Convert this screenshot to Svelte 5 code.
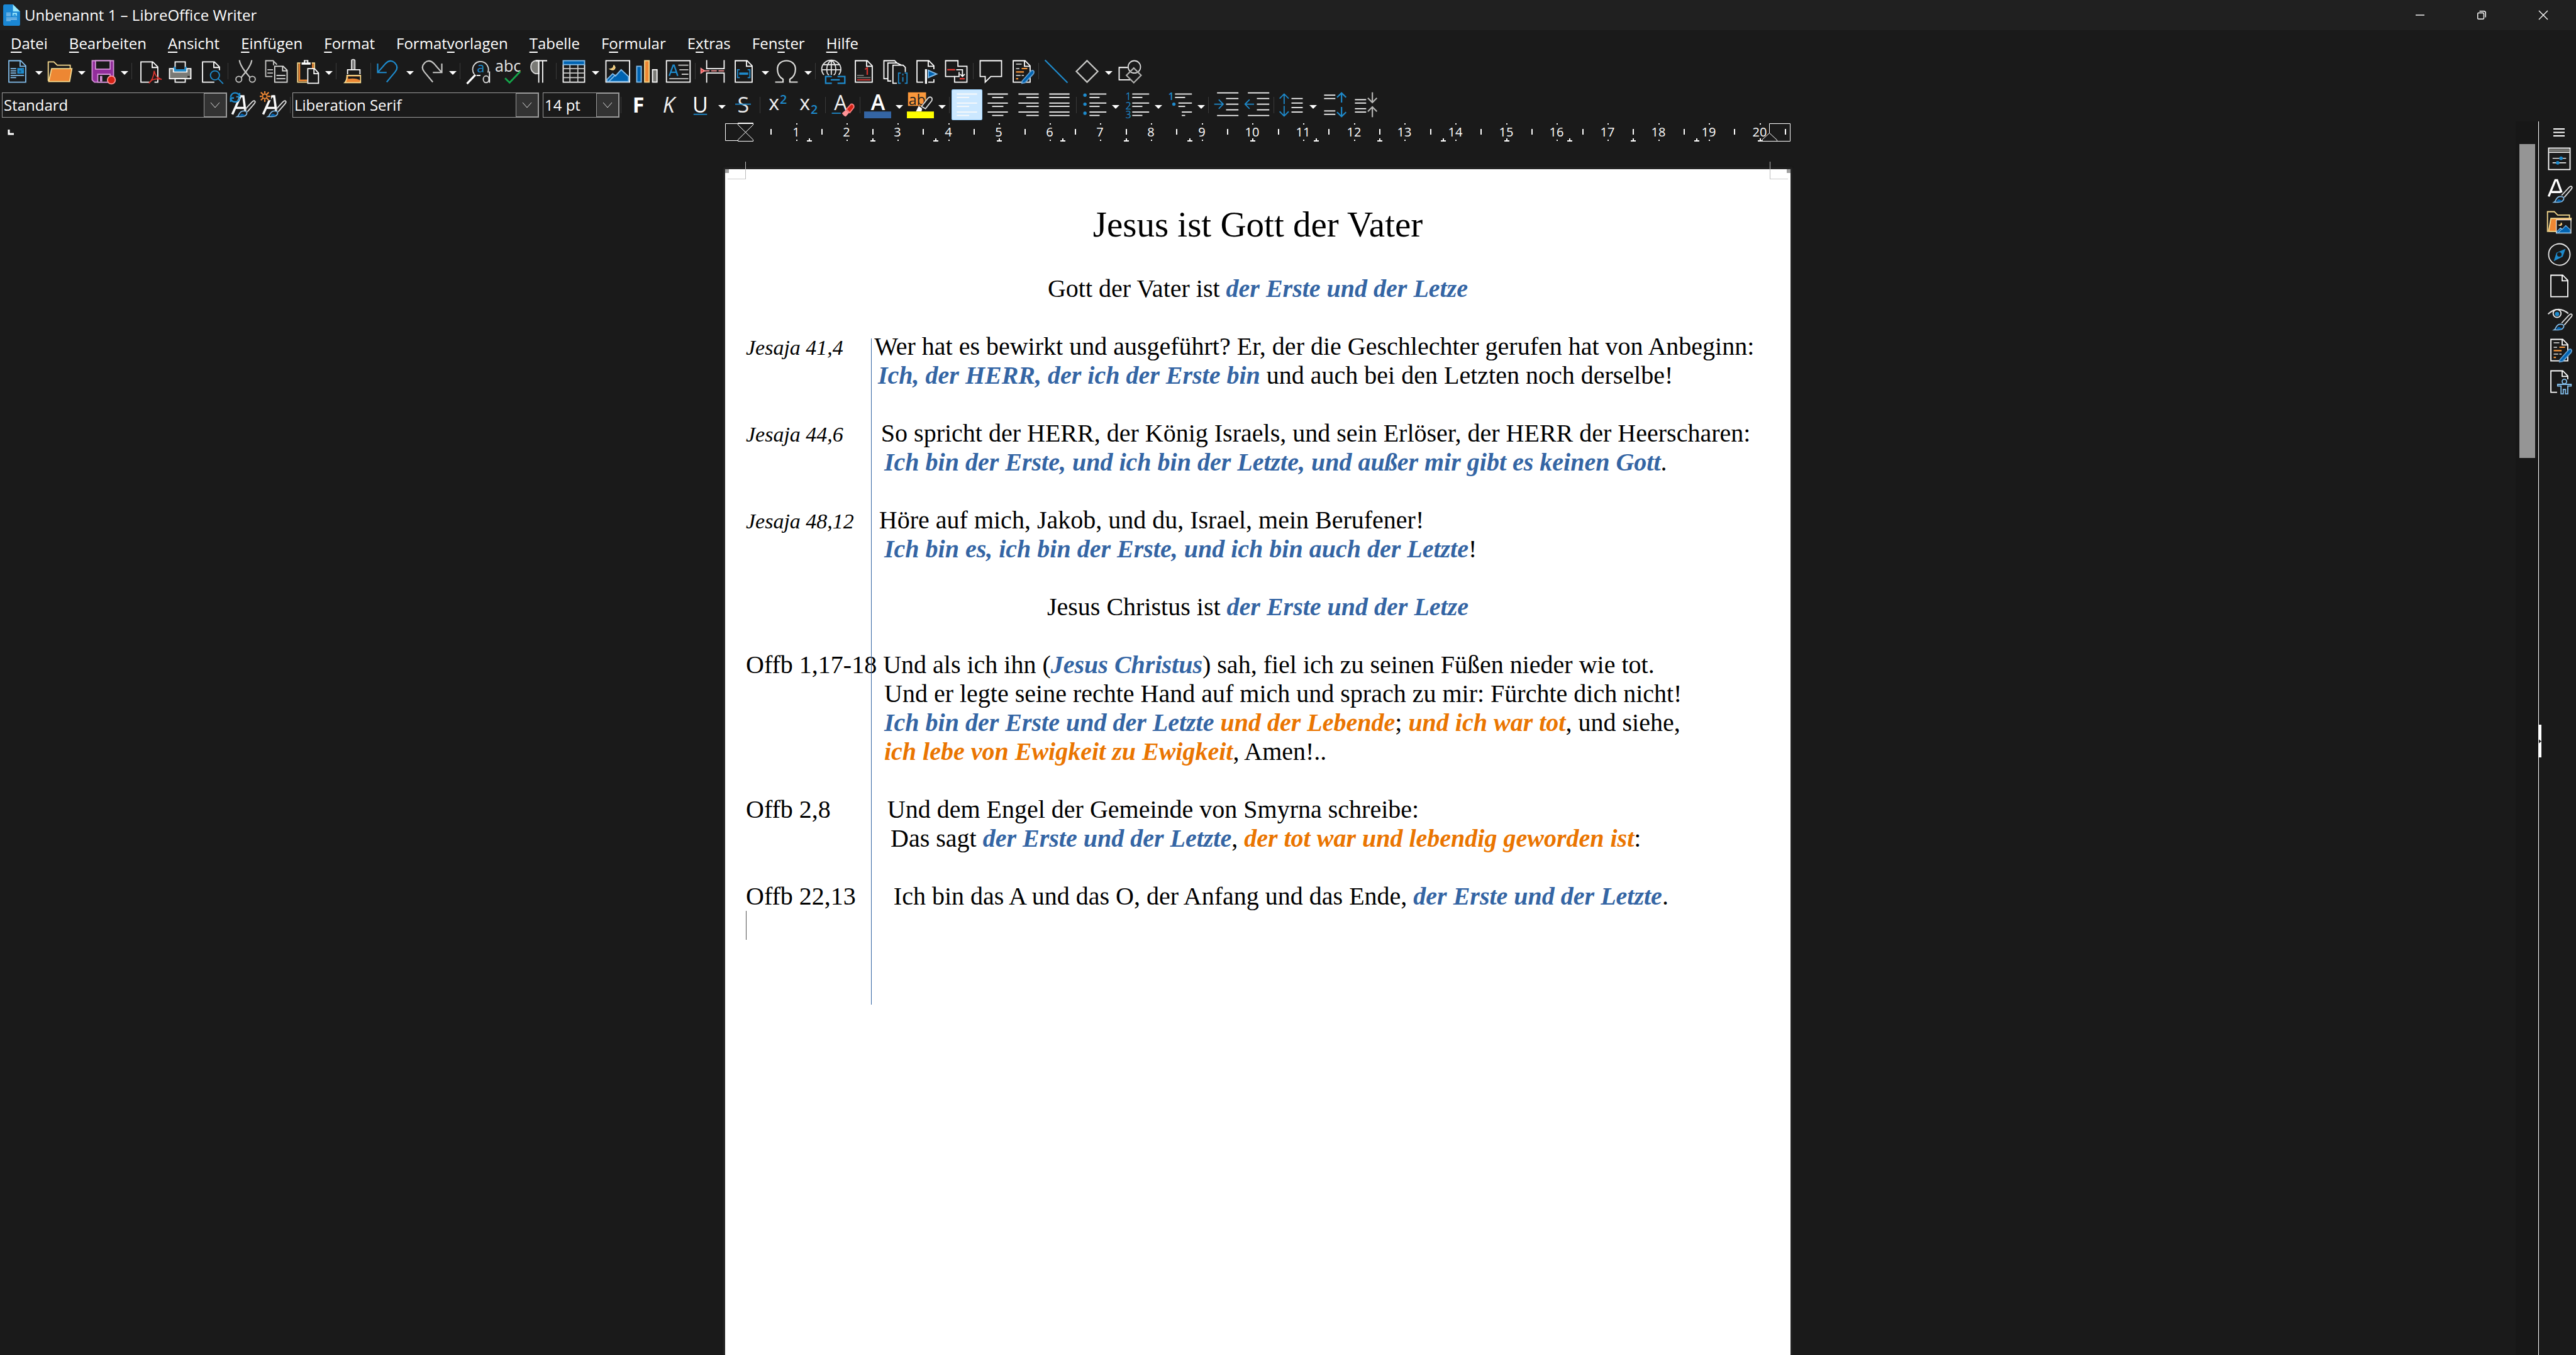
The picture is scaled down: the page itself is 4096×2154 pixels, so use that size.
<script>
  const menus = [
    ['', 'D', 'atei'],
    ['', 'B', 'earbeiten'],
    ['', 'A', 'nsicht'],
    ['', 'E', 'infügen'],
    ['', 'F', 'ormat'],
    ['Format', 'v', 'orlagen'],
    ['', 'T', 'abelle'],
    ['F', 'o', 'rmular'],
    ['E', 'x', 'tras'],
    ['Fen', 's', 'ter'],
    ['', 'H', 'ilfe'],
  ];

  const sheet = (color = '#fff') =>
    `<path d="M4.5 2.5h10.5l4.5 4.5v14.5h-15z" stroke="${color}"/><path d="M14.5 2.5v5h5" stroke="${color}"/>`;
  const brush = `<path d="M14 16.5l6.5-7c1-1 2-1.300 2.500-.8s.2 1.600-.6 2.500l-6 7" stroke="#ddd"/><path d="M7.500 22.500c1.800-1 1.400-5 5.500-5 2.500 0 3.300 1 2.800 2.600-.6 1.900-3 2.400-4.800 2.400z" stroke="#83beec"/><path d="M9 22c1.200-.5 1.300-2 2.500-2s1.500 1 3 1l-1 1z" fill="#0063b1"/>`;
  const thickA = `<path d="M3 20.500L10.300 4.500h2.500l1.700 13M5.500 14.800h8" stroke="#fafafa" stroke-width="2"/>`;
  const mountains = (x, y, s) =>
    `<g transform="translate(${x} ${y}) scale(${s})"><rect x=".5" y=".5" width="21" height="19" fill="#1a1a1a" stroke="#fff"/><path d="M1.500 19v-2l5-5 2.500 2 5-5.500 6.500 6v4.500z" fill="#0063b1" stroke="#83beec"/><path d="M3 19l6-6" stroke="#83beec"/><path d="M7.500 4.500q0 3-3 3.500 3.500 1.500 4-1.500z" fill="#ed8733" stroke="#f8db8f"/></g>`;
  const page_edit = `${sheet()}<path d="M7 5.500h5M7 9.500h3M7 15.500h4M12 15.500h2" stroke="#c8c8c6"/><path d="M12 9.500h5M7 12.500h7M7 18.500h2" stroke="#fb983b" stroke-width="1.200"/><path d="M12.500 20.500l7.500-8.500q1.500-1.500 2.500-.5t-.3 3l-7.200 7.500-2.800.5z" fill="#0063b1" stroke="#659fd0"/>`;
  const lines = (rows) => rows.map(([x, y, w]) => `<path d="M${x} ${y}h${w}" stroke="#fafafa" stroke-width="1"/>`).join('');
  const ys = [2.5, 5.5, 10.5, 13.5, 18.5, 21.5];
  const para = (x, short_x, full, short) => lines(ys.map((y, i) => (i % 2 ? [short_x, y, short] : [x, y, full])));

  const icons = {
    new: `${sheet('#83beec')}<path d="M6 9.500h5M6 11.500h5M6 13.500h5M6 15.500h12M6 17.500h5" stroke="#83beec"/><rect x="12" y="9" width="6" height="5" fill="#1e8bcd"/><path d="M13.500 13v-2h2v2zM16.500 10h1v1h-1z" fill="#15608f"/>`,
    open: `<path d="M1.500 20.500v-17h5l3 3h11.500v3.500" stroke="#f8db8f"/><path d="M4.500 9.500h18l-2 11.500h-18.500z" fill="#ed8733" stroke="#f8db8f"/>`,
    save: `<path d="M2.500 2.500h19v19h-17l-2-2z" fill="#922e9b" stroke="#d492d8"/><path d="M5.500 2.500h13v7.500h-13z" fill="#1a1a1a" stroke="#d492d8"/><path d="M7.500 21.500v-7h11v7z" fill="#1a1a1a" stroke="#d492d8"/><path d="M10.500 16v5" stroke="#d492d8" stroke-width="2"/><circle cx="19.600" cy="19.600" r="3.500" fill="#d62316" stroke="#ff9396"/>`,
    pdf: `<path d="M12 21.500h-7.500v-18h10.500l4.500 4.500v13.500h-3M14.500 3.500v5h5" stroke="#fff"/><path d="M11.500 22.500q4-3 4.800-11q1.200 6.500 6.700 7.500q-6-1.200-10 1.500" stroke="#d8342f"/>`,
    print: `<path d="M7.500 11v-7.500h9v7.500" stroke="#fff"/><path d="M6 8h2v2h8v-2h2v4H6z" fill="#1e8bcd"/><path d="M2.500 9.500h3.500v3h12v-3h3.500v9h-19z" fill="#7a7a76" stroke="#fff"/><path d="M7 10.500h10v1.500h-10z" fill="#1e8bcd"/><rect x="18.500" y="16" width="2" height="1.500" fill="#222"/><path d="M7.500 18.500v3h9v-3z" fill="#1a1a1a" stroke="#fff"/>`,
    preview: `<path d="M15 21.500h-10.500v-18h10.500l4.500 4.500v3M14.500 3.500v5h5" stroke="#fff"/><circle cx="15.500" cy="15.500" r="4" stroke="#1e8bcd"/><path d="M18.300 18.300l4.500 4.700" stroke="#1e8bcd"/>`,
    cut: `<path d="M6.500 2q.5 4 5 10l4.500 5.500M17.500 2q-.5 4-5 10l-4.500 5.500" stroke="#c8c8c6" stroke-width="1.200"/><circle cx="6" cy="19" r="2.600" stroke="#c8c8c6"/><circle cx="18" cy="19" r="2.600" stroke="#c8c8c6"/>`,
    copy: `<path d="M8.500 16.500h-6v-14h6.500l3.500 3.500M9.500 2.500v4M4 10.500h5M4 13.500h5" stroke="#c8c8c6"/><path d="M10.500 7.500h7.500l3.500 3.500v10.500h-11zM17.500 7.500v4h4M12 15.500h8M12 18.500h8" stroke="#e0e0de"/>`,
    paste: `<path d="M6 4.500h-2.500v17h8.500M16 4.500h2.500v5" stroke="#f8db8f"/><path d="M5 5v15h7M17 5v5" stroke="#ed8733" stroke-width="1.500"/><path d="M7 4h2v-2h4v2h2v2H7z" fill="#fff"/><circle cx="11" cy="3.500" r="1" fill="#555"/><path d="M12.500 9.500h6l3.500 4v9h-9.500zM18 9.500v4.500h4" stroke="#fff"/>`,
    clone: `<path d="M10 10V2.500q0-1 1.500-1t1.500 1V10" fill="#777" stroke="#ddd"/><path d="M6.500 14.500v-4h11v4" stroke="#fff"/><path d="M6 15.500h12v6.500H4q2-2 2-6.500z" fill="#ed8733" stroke="#f8db8f"/><path d="M7 16.500h10.500v3.500q-3-2.500-10.500-1.500z" fill="#1a1a1a"/>`,
    undo: `<path d="M2.500 5v8h8M3 12.500l6.500-7.500q4-4 8-.8c3 3 2.500 6 .5 8.300l-7.500 9" stroke="#1e8bcd" stroke-width="1.200"/>`,
    redo: `<path d="M21.500 5v8h-8M21 12.500l-6.500-7.500q-4-4-8-.8c-3 3-2.500 6-.5 8.300l7.500 9" stroke="#c8c8c6" stroke-width="1.200"/>`,
    find: `<path d="M9 14.500A7 7 0 1 1 21 13" stroke="#ddd"/><path d="M10 15l-7.500 8" stroke="#fff" stroke-width="1.800"/><text x="11.500" y="13" font-size="12" fill="#1e8bcd">a</text><path d="M11 15.500h3.500M22.500 12v10" stroke="#fff"/><ellipse cx="19.500" cy="19" rx="2.500" ry="3" stroke="#ddd"/>`,
    spell: `<text x="0" y="12" font-size="14" fill="#e6e6e6">abc</text><path d="M9 18l4 4 9.500-10" stroke="#14a84b" stroke-width="1.500"/>`,
    marks: `<path d="M11.500 2.500h-3q-4 1-4 5.500t4 6h3z" fill="#7a7a76" stroke="#ddd"/><path d="M9 2.500h10M11.500 2.500v19.500M15 2.500v19.500" stroke="#fff"/>`,
    table: `<path d="M2.500 6v15.500h19v-15.500" stroke="#fff"/><path d="M8.500 6v15.500M15.500 6v15.500M2.500 9.500h19M2.500 13.500h19M2.500 17.500h19" stroke="#c8c8c6"/><rect x="2.500" y="2.500" width="19" height="3.500" fill="#0063b1" stroke="#83beec"/>`,
    image: mountains(2, 2, 1),
    chart: `<rect x="2.500" y="7.500" width="4" height="14" fill="#0063b1" stroke="#83beec"/><rect x="9.500" y="2.500" width="4" height="19" fill="#ed8733" stroke="#f8db8f"/><rect x="16.500" y="10.500" width="4" height="11" fill="#7a7a76" stroke="#fff"/>`,
    textbox: `<rect x="1.500" y="2.500" width="21" height="19" stroke="#fff"/><path d="M4 16l3.500-9.500h.8L11.500 16M5 12.800h5.500" stroke="#1e8bcd" stroke-width="1.300"/><path d="M12 6.500h9M13 10.500h8M15 14.500h6M4 18.500h17" stroke="#c8c8c6"/>`,
    pagebreak: `<path d="M6.500 2v7.500h15.500v-7.500M6.500 22v-8.500h15.500v8.500" stroke="#fff"/><path d="M4 11.500h18" stroke="#ff9396" stroke-dasharray="5 1.500"/><path d="M1.500 9.500l3 2-3 2z" fill="#d8342f" stroke="#ff9396"/>`,
    field: `${sheet()}<path d="M8.500 10.500h-2v7h2M15.500 10.500h2v7h-2" stroke="#1e8bcd"/><path d="M8 14h8" stroke="#1e8bcd" stroke-width="2"/>`,
    omega: `<path d="M2 21.500h7v-2.500q-5-3-5-9c0-10 16-10 16 0q0 6-5 9v2.500h7" stroke="#e0e0de" stroke-width="1.200"/>`,
    link: `<path d="M4 15q-2-2-2-5a8.500 8 0 0 1 17 0q0 3-2 5M2 10.500h17M3.500 6h14M10.500 2q-4 3-4 8t2 5M10.500 2q4 3 4 8t-2 5M10.500 2v13" stroke="#e8e8e8"/><path d="M11 16.500h-5.500v6h5.500M16 16.500h6.500v6h-6.500M10 19.500h8" stroke="#1e8bcd" stroke-width="1.300"/>`,
    footnote: `${sheet()}<text x="12" y="15" font-size="9" font-weight="600" fill="#e23a35">1</text><path d="M6 15.500h6M6 17.500h12" stroke="#7a7a76"/><path d="M6 19.500h12" stroke="#e23a35"/>`,
    endnote: `<path d="M6 18.500h-3.500v-16h9.500l2 2M9 20.500h-3v-16h8l4 2M14 22.500h-3.500v-16h9l2 2v4" stroke="#fff"/><path d="M17.500 13.500h-2v9h2M21 13.500h2v9h-2M19.300 14v1.500M19.300 17v4" stroke="#1e8bcd"/>`,
    bookmark: `<path d="M10 21.500h-5.500v-19h10.500l4.500 4.500v3M14.500 2.500v5h5M19.500 19v2.500h-5" stroke="#fff"/><path d="M12.500 10v13" stroke="#fff" stroke-width="1.800"/><path d="M14.500 11v6.500l7.500-3.200z" fill="#0063b1" stroke="#83beec"/>`,
    crossref: `<path d="M13.500 8v-5.500h-11v14h8" stroke="#fff"/><path d="M14 7.500h7.500v14h-11v-5h4v-4" stroke="#fff"/><path d="M4 10.500h7" stroke="#e23a35" stroke-width="1.300"/><path d="M12 10.500h5.500v6M15.500 14.500l2 2 2-2" stroke="#fff"/><path d="M15 18.500h4.500" stroke="#e23a35" stroke-width="1.300"/>`,
    comment: `<path d="M2.500 2.500h19v14h-9.500l-5 5v-5h-4.500z" stroke="#fff"/>`,
    track: page_edit,
    line: `<path d="M2 2l20 20" stroke="#1e8bcd" stroke-width="1.200"/>`,
    diamond: `<path d="M12 2.500l9.500 9.500-9.500 9.500-9.500-9.500z" stroke="#c8c8c6" stroke-width="1.300"/>`,
    shapes: `<path d="M10 8.500h-7.500v11h10" stroke="#fff"/><ellipse cx="16" cy="8" rx="5.500" ry="5.500" stroke="#ddd"/><path d="M15.500 9l6.500 6.500-6.500 6.500-6.500-6.500z" stroke="#b0b0ae" stroke-width="1.200"/>`,
    updatestyle: `${thickA}${brush}<path d="M1.500 5q1-3.500 4-3.500t4 3M9.500 1.500v3.500h-3M9.500 6q-1 3.500-4 3.500t-4-3M1.500 9.500v-3.500h3" stroke="#1e8bcd" stroke-width="1.300"/>`,
    newstyle: `${thickA}${brush}<path d="M0 0h12v4h-2v4h-3z" fill="#1a1a1a"/><path d="M10.300 4.500h2.500" stroke="#fafafa" stroke-width="2"/><circle cx="4.500" cy="4.500" r="2" stroke="#ed8733"/><path d="M4.500 0v2M4.500 7v2.500M0 4.500h2M7 4.500h2.500M1 1l2 2M8 1l-2 2M1 8l2-2M8 8l-2-2" stroke="#ed8733" stroke-width="1.200"/>`,
    bold: `<text x="6.500" y="19" font-size="19" font-weight="700" fill="#fff">F</text>`,
    italic: `<text x="6" y="19" font-size="19" font-style="italic" fill="#f0f0f0">K</text>`,
    underline: `<text x="5" y="19" font-size="19" fill="#fff">U</text><path d="M6 20.500h12" stroke="#1e8bcd"/>`,
    strike: `<text x="7" y="19" font-size="19" fill="#e8e8e8">S</text><path d="M5 11.500h14" stroke="#1e8bcd"/>`,
    sup: `<text x="4" y="17" font-size="18" fill="#f0f0f0">x</text><text x="14" y="11" font-size="11" font-weight="600" fill="#1e8bcd">2</text>`,
    sub: `<text x="4" y="17" font-size="18" fill="#f0f0f0">x</text><text x="14" y="20" font-size="11" font-weight="600" fill="#1e8bcd">2</text>`,
    clear: `<text x="4" y="17" font-size="18" fill="#f0f0f0">A</text><path d="M2 19.500h8" stroke="#1e8bcd"/><path d="M15 16l4-4.500q1-.5 2 .5t.5 2.500l-3.500 4.500z" fill="#d62316" stroke="#ff7f80"/><path d="M11 19.500l3.500-3 3 2.500-3 3.500q-1.500 0-3.500-3z" fill="#ff9396"/>`,
    color: `<text x="6" y="17" font-size="19" font-weight="600" fill="#fff">A</text><rect x="0" y="18" width="24" height="6" fill="#3465a4"/>`,
    mark: `<rect x="1" y="1" width="16" height="12" fill="#fb983b"/><text x="1.500" y="12" font-size="13" fill="#222">ab</text><path d="M13 13.500l5.500-7q1.500-2 3-1t.5 3l-5.500 7z" fill="#1a1a1a" stroke="#ddd"/><path d="M8 18l2.500-5 3 2.500-.5 2.500z" fill="#fff"/><rect x="0" y="18" width="24" height="6" fill="#ff0"/>`,
    left: para(3, 3, 18, 11),
    center: para(3, 7, 18, 10),
    right: para(3, 10, 18, 11),
    justify: lines(ys.map((y) => [3, y, 18])),
    bullets: `${para(8, 8, 15, 9)}<circle cx="4" cy="3.500" r="1.500" fill="#1e8bcd"/><circle cx="4" cy="11.500" r="1.500" fill="#1e8bcd"/><circle cx="4" cy="19.500" r="1.500" fill="#1e8bcd"/>`,
    numbers: `${para(8, 8, 15, 9)}<g font-size="9" fill="#1e8bcd"><text x="2" y="8">1</text><text x="2" y="16">2</text><text x="2" y="24">3</text></g>`,
    outline: `${lines([[8, 2.5, 15], [8, 5.5, 9], [11, 10.5, 12], [11, 13.5, 6], [14, 18.5, 9], [14, 21.5, 3]])}<text x="2" y="8" font-size="9" font-weight="600" fill="#1e8bcd">1</text><circle cx="7" cy="11.500" r="1.500" fill="#1e8bcd"/>`,
    indent: `${lines([[4, 1.5, 19], [12, 6.5, 11], [12, 11.5, 11], [12, 16.5, 11], [4, 21.5, 19]])}<path d="M1.500 11.500h8M5.500 7.500l4 4-4 4" stroke="#1e8bcd"/>`,
    dedent: `${lines([[4, 1.5, 19], [12, 6.5, 11], [12, 11.5, 11], [12, 16.5, 11], [4, 21.5, 19]])}<path d="M1.500 11.500h8M5.500 7.500l-4 4 4 4" stroke="#1e8bcd"/>`,
    spacing: `${lines([[12, 6.5, 10], [12, 10.5, 10], [12, 14.5, 10], [12, 18.5, 10]])}<path d="M5.500 2.500v9M1.500 6.500l4-4 4 4M5.500 13v9M1.500 18l4 4 4-4" stroke="#1e8bcd"/>`,
    increase: `${lines([[3, 3.5, 10], [3, 6.5, 10], [3, 17.5, 10], [3, 20.5, 10]])}<path d="M18.500 1.500v8.500M14.500 5.500l4-4 4 4M18.500 14v8.500M14.500 18.500l4 4 4-4" stroke="#1e8bcd" stroke-width="1.200"/>`,
    decrease: `${lines([[3, 7.5, 10], [3, 10.5, 10], [3, 15.5, 10], [3, 18.5, 10]])}<path d="M18.500 1v9M14.500 6l4 4 4-4M18.500 23v-9M14.500 18l4-4 4 4" stroke="#b8b8b6" stroke-width="1.200"/>`,
    properties: `<rect x="2.500" y="2.500" width="19" height="19" stroke="#fff"/><path d="M3 4.500h18" stroke="#7a7a76" stroke-width="2"/><path d="M3 6.300h18M6 11.500h12M6 15.500h12" stroke="#fff" stroke-width=".8"/><circle cx="13.500" cy="11.500" r="1.600" fill="#1e8bcd"/><circle cx="10.500" cy="15.500" r="1.600" fill="#1e8bcd"/>`,
    styles: `<path d="M2.500 17.500L8.500 3h1.500l4 11M5 13.500h8" stroke="#fff" stroke-width="1.900"/>${brush}`,
    gallery: `<path d="M1.500 20.500v-18h6l3 3h10.500v3" stroke="#f8db8f"/><path d="M4.500 8.500h18l-2 11.500h-18z" fill="#ed8733" stroke="#f8db8f"/>${mountains(9, 9.5, 0.62)}`,
    navigator: `<circle cx="12" cy="12" r="9.500" stroke="#e8e8e8"/><path d="M17.500 7l-2.500 7-8 4 2.500-7.500z" fill="#1e8bcd"/><circle cx="12" cy="12" r="2" fill="#1a1a1a"/>`,
    page: sheet(),
    inspector: `<path d="M2 8.500q9-8 18-.5" stroke="#ddd" stroke-width="1.200"/><circle cx="10" cy="8" r="3.500" fill="#1a1a1a" stroke="#eee"/><circle cx="10" cy="8.500" r="1.900" fill="#1e8bcd"/>${brush}`,
    changes: page_edit,
    access: `<path d="M10 21.500h-5.500v-19h10.500l4.500 4.500v3M14.500 2.500v5h5" stroke="#fff"/><circle cx="16.500" cy="12" r="2" stroke="#83beec"/><path d="M10.500 14.500h12v1.500h-3v7h-2v-4h-2v4h-2v-7h-3z" stroke="#83beec"/>`,
  };

  // '|' is a separator, a trailing '+' adds a drop-down arrow
  const standard_bar = [
    'new+ Neu', 'open+ Öffnen', 'save+ Speichern', '|', 'pdf Als PDF exportieren', 'print Drucken', 'preview Druckvorschau', '|',
    'cut Ausschneiden', 'copy Kopieren', 'paste+ Einfügen', '|', 'clone Format übertragen', '|', 'undo+ Rückgängig', 'redo+ Wiederherstellen', '|',
    'find Suchen und Ersetzen', 'spell Rechtschreibung', 'marks Formatierungszeichen', '|', 'table+ Tabelle', 'image Bild', 'chart Diagramm', 'textbox Textfeld', '|',
    'pagebreak Seitenumbruch', 'field+ Feldbefehl', 'omega+ Sonderzeichen', '|', 'link Hyperlink', 'footnote Fußnote', 'endnote Endnote',
    'bookmark Textmarke', 'crossref Querverweis', '|', 'comment Kommentar', 'track Änderungen', '|', 'line Linie', 'diamond+ Standardformen', 'shapes Zeichenfunktionen',
  ].map(parse);
  const style_bar = ['updatestyle Vorlage aktualisieren', 'newstyle Neue Vorlage', '|'].map(parse);
  const format_bar = [
    '|', 'bold Fett', 'italic Kursiv', 'underline+ Unterstrichen', 'strike Durchgestrichen', '|', 'sup Hochgestellt', 'sub Tiefgestellt', '|',
    'clear Formatierung löschen', '|', 'color+ Schriftfarbe', 'mark+ Hervorhebungsfarbe', '|', 'left Links', 'center Zentriert', 'right Rechts', 'justify Blocksatz', '|',
    'bullets+ Liste', 'numbers+ Nummerierung', 'outline+ Gliederung', '|', 'indent Einzug erhöhen', 'dedent Einzug vermindern', '|',
    'spacing+ Zeilenabstand', 'increase Absatzabstand erhöhen', 'decrease Absatzabstand vermindern',
  ].map(parse);
  const panel = ['properties Eigenschaften', 'styles Formatvorlagen', 'gallery Galerie', 'navigator Navigator', 'page Seite', 'inspector Stil-Inspektor', 'changes Änderungen verwalten', 'access Barrierefreiheit'].map(parse);

  function parse(item) {
    const [key, ...rest] = item.split(' ');
    return { sep: key === '|', icon: key.replace('+', ''), drop: key.endsWith('+'), label: rest.join(' ') };
  }

  // ruler: one centimetre, measured from the left page margin
  const cm = 80.64;
  const at = (n) => Math.round(33 + n * cm);
  const numbers = Array.from({ length: 20 }, (_, i) => i + 1);
  const halves = Array.from({ length: 21 }, (_, i) => i + 0.5);
  const tabs = Array.from({ length: 16 }, (_, i) => (i + 1) * 1.25);

  const gap = (n) => ' '.repeat(n);
  // [style, text]: l = label, b = blue, o = orange, empty = plain
  const verses = [
    [['l', 'Jesaja 41,4'], ['', gap(5) + 'Wer hat es bewirkt und ausgeführt? Er, der die Geschlechter gerufen hat von Anbeginn:']],
    [['', gap(21)], ['b', 'Ich, der HERR, der ich der Erste bin'], ['', ' und auch bei den Letzten noch derselbe!']],
    [],
    [['l', 'Jesaja 44,6'], ['', gap(6) + 'So spricht der HERR, der König Israels, und sein Erlöser, der HERR der Heerscharen:']],
    [['', gap(22)], ['b', 'Ich bin der Erste, und ich bin der Letzte, und außer mir gibt es keinen Gott'], ['', '.']],
    [],
    [['l', 'Jesaja 48,12'], ['', gap(4) + 'Höre auf mich, Jakob, und du, Israel, mein Berufener!']],
    [['', gap(22)], ['b', 'Ich bin es, ich bin der Erste, und ich bin auch der Letzte'], ['', '!']],
  ];
  const revelation = [
    [['', 'Offb 1,17-18 Und als ich ihn ('], ['b', 'Jesus Christus'], ['', ') sah, fiel ich zu seinen Füßen nieder wie tot.']],
    [['', gap(22) + 'Und er legte seine rechte Hand auf mich und sprach zu mir: Fürchte dich nicht!']],
    [['', gap(22)], ['b', 'Ich bin der Erste und der Letzte'], ['', ' '], ['o', 'und der Lebende'], ['', '; '], ['o', 'und ich war tot'], ['', ', und siehe,']],
    [['', gap(22)], ['o', 'ich lebe von Ewigkeit zu Ewigkeit'], ['', ', Amen!..']],
    [],
    [['', 'Offb 2,8' + gap(9) + 'Und dem Engel der Gemeinde von Smyrna schreibe:']],
    [['', gap(23) + 'Das sagt '], ['b', 'der Erste und der Letzte'], ['', ', '], ['o', 'der tot war und lebendig geworden ist'], ['', ':']],
    [],
    [['', 'Offb 22,13' + gap(6) + 'Ich bin das A und das O, der Anfang und das Ende, '], ['b', 'der Erste und der Letzte'], ['', '.']],
  ];
</script>

{#snippet icon(name)}
  <svg class="icon" viewBox="0 0 24 24" fill="none">{@html icons[name]}</svg>
{/snippet}

{#snippet bar(items)}
  {#each items as item}
    {#if item.sep}
      <span class="sep"></span>
    {:else}
      <button class="tool" class:active={item.icon === 'left'} aria-label={item.label}>{@render icon(item.icon)}</button>
      {#if item.drop}
        <button class="drop" aria-label="{item.label} – Auswahl"><span class="arrow"></span></button>
      {/if}
    {/if}
  {/each}
{/snippet}

{#snippet combo(label, value, size)}
  <div class="combo {size}">
    <select aria-label={label}><option>{value}</option></select>
    <span class="chevron"><svg viewBox="0 0 16 12" fill="none"><path d="M1 2l7 8 7-8" stroke="#ddd" /></svg></span>
  </div>
{/snippet}

{#snippet paragraphs(rows)}
  {#each rows as row}
    <p>{#each row as [kind, text]}<span class={kind}>{text}</span>{/each}</p>
  {/each}
{/snippet}

<div class="window">
  <header class="titlebar">
    <svg class="logo" viewBox="0 0 38 48">
      <path d="M4 0h18l16 16v28q0 4-4 4H4q-4 0-4-4V4q0-4 4-4z" fill="#1a87d4" />
      <path d="M22 0l16 16H22z" fill="#9be8fb" />
      <path d="M7 19.500h10M7 22.500h10M7 25.500h10M7 30.500h24M7 33.500h24M7 36.500h10" stroke="#fff" />
      <rect x="21" y="19" width="10" height="7" fill="#9be8fb" />
      <path d="M22 25l3-4 2 2 1-1 2 3z" fill="#1a87d4" />
    </svg>
    <h1>Unbenannt 1 – LibreOffice Writer</h1>
    <div class="controls">
      <button aria-label="Minimieren"><svg viewBox="0 0 20 20" fill="none"><path d="M0 10h20" stroke="#fff" stroke-width="2" /></svg></button>
      <button aria-label="Verkleinern"><svg viewBox="0 0 20 20" fill="none"><rect x="1" y="5" width="14" height="14" rx="2" stroke="#fff" stroke-width="2" /><path d="M5 1h10q4 0 4 4v10" stroke="#fff" stroke-width="2" /></svg></button>
      <button aria-label="Schließen"><svg viewBox="0 0 20 20" fill="none"><path d="M0 0l20 20M20 0L0 20" stroke="#fff" stroke-width="2" /></svg></button>
    </div>
  </header>

  <nav class="menubar">
    {#each menus as [before, key, after]}
      <button>{before}<u>{key}</u>{after}</button>
    {/each}
  </nav>

  <div class="toolbar first">{@render bar(standard_bar)}</div>
  <div class="toolbar second">
    {@render combo('Absatzvorlage', 'Standard', 'wide')}
    {@render bar(style_bar)}
    {@render combo('Schriftname', 'Liberation Serif', 'font')}
    {@render combo('Schriftgröße', '14 pt', 'size')}
    {@render bar(format_bar)}
  </div>

  <div class="workspace">
    <main class="editor">
      <svg class="tabtype" viewBox="0 0 10 9" fill="none"><path d="M2 0v7h8" stroke="#fff" stroke-width="3" /></svg>
      <svg class="ruler" viewBox="0 0 1694 32" fill="none" stroke="#fff">
        <path d="M45 2.500H.5v27H20M1660.500 18V2.500h33v28h-24" />
        <path d="M20.500 1.500h24v3L20.500 28v2.500h24V28L20.500 4.500zM1648.500 30.500v-2l12-11 12 11v2z" />
        {#each halves as n}
          <path d="M{at(n)} 11v9" stroke-width="2" />
        {/each}
        {#each numbers as n}
          <path d="M{at(n)} 2v2M{at(n)} 28v2" stroke-width="2" />
          <text x={at(n) - 1} y="23" text-anchor="middle" font-size="20" fill="#fff" stroke="none">{n}</text>
        {/each}
        {#each tabs as n}
          <path d="M{at(n)} 26v4M{at(n) - 4} 30h8" stroke-width="2" />
        {/each}
      </svg>

      <article class="page">
        <span class="corner start"></span>
        <span class="corner end"></span>
        <span class="divider"></span>
        <h2>Jesus ist Gott der Vater</h2>
        <p></p>
        <p class="center">Gott der Vater ist <span class="b">der Erste und der Letze</span></p>
        <p></p>
        {@render paragraphs(verses)}
        <p></p>
        <p class="center">Jesus Christus ist <span class="b">der Erste und der Letze</span></p>
        <p></p>
        {@render paragraphs(revelation)}
        <p class="caret"></p>
      </article>
    </main>

    <div class="scrollbar"><div class="thumb"></div></div>

    <aside class="sidebar">
      <button class="handle" aria-label="Seitenleiste ausblenden"><svg viewBox="0 0 5 6"><path d="M1 0l4 3-4 3z" fill="#1a1a1a" /></svg></button>
      <button class="burger" aria-label="Einstellungen der Seitenleiste"><svg viewBox="0 0 18 13"><path d="M0 1h18M0 6.500h18M0 12h18" stroke="#fff" stroke-width="2" /></svg></button>
      <div class="decks">
        {#each panel as item}
          <button class="deck" aria-label={item.label}>{@render icon(item.icon)}</button>
        {/each}
      </div>
    </aside>
  </div>
</div>

<style>
  :global(body) {
    background: #1a1a1a;
    overflow: hidden;
  }
  .window {
    display: flex;
    flex-direction: column;
    height: 100vh;
    background: #1a1a1a;
    color: #fff;
    font-family: "Open Sans", "Noto Sans", sans-serif;
    font-size: 24px;
  }
  button {
    display: flex;
    align-items: center;
    justify-content: center;
    padding: 0;
    border: none;
    background: none;
    color: inherit;
    font: inherit;
  }
  svg {
    display: block;
    overflow: visible;
  }

  .titlebar {
    display: flex;
    align-items: center;
    flex: none;
    height: 48px;
    padding: 0 3px 0 5px;
    background: #202020;
  }
  .logo {
    width: 27px;
    height: 34px;
  }
  h1 {
    flex: 1;
    margin: 0 0 0 7px;
    font-size: 24px;
    font-weight: 400;
    line-height: 50px;
  }
  .controls {
    display: flex;
  }
  .controls button {
    width: 98px;
    height: 46px;
  }
  .controls svg {
    width: 14px;
    height: 14px;
  }

  .menubar {
    display: flex;
    flex: none;
    box-sizing: border-box;
    height: 38px;
    padding-top: 2px;
  }
  .menubar button {
    display: block;
    padding: 0 17px;
    line-height: 38px;
  }
  u {
    text-decoration-thickness: 2px;
    text-underline-offset: 4px;
    text-decoration-skip-ink: none;
  }

  .toolbar {
    display: flex;
    align-items: center;
    flex: none;
    height: 53px;
  }
  .toolbar.first {
    height: 54px;
    padding-left: 3px;
  }
  .toolbar.second {
    padding-left: 3px;
  }
  .icon {
    width: 43px;
    height: 43px;
  }
  .tool {
    width: 49px;
    height: 49px;
  }
  .tool.active {
    border-radius: 3px;
    background: #cce8ff;
    box-shadow: inset 0 0 0 1px #99d1ff;
  }
  .drop {
    width: 19px;
    height: 49px;
  }
  .arrow {
    margin-top: 6px;
    border: 6px solid transparent;
    border-top-color: #fff;
    border-bottom: none;
  }
  .sep {
    width: 1px;
    height: 26px;
    margin: 0 3px 0 2px;
    background: #3a3a3a;
  }
  .combo {
    position: relative;
    box-sizing: border-box;
    height: 40px;
    border: 1px solid #9a9a9a;
  }
  .combo.wide {
    width: 358px;
  }
  .combo.font {
    width: 392px;
    margin-right: 6px;
  }
  .combo.size {
    width: 122px;
  }
  select {
    width: 100%;
    height: 100%;
    padding: 0 34px 0 2px;
    border: none;
    appearance: none;
    background: #1a1a1a;
    color: #fff;
    font: inherit;
  }
  .chevron {
    position: absolute;
    inset: 0 0 0 auto;
    display: flex;
    align-items: center;
    justify-content: center;
    width: 34px;
    border: 1px solid #9a9a9a;
    background: #333;
    pointer-events: none;
  }
  .chevron svg {
    width: 16px;
    height: 12px;
  }

  .workspace {
    display: flex;
    flex: 1;
    min-height: 0;
  }
  .editor {
    position: relative;
    display: flex;
    flex: 1;
    flex-direction: column;
    align-items: center;
    overflow: hidden;
  }
  .tabtype {
    position: absolute;
    top: 13px;
    left: 12px;
    width: 10px;
    height: 9px;
  }
  .ruler {
    flex: none;
    width: 1694px;
    height: 32px;
    margin: 1px 0 43px;
  }
  .page {
    position: relative;
    flex: 1;
    box-sizing: border-box;
    width: 1694px;
    padding: 55px 33px 0;
    background: #fff;
    box-shadow: 0 0 3px 2px #2a2a2a;
    color: #000;
    font-family: "Liberation Serif", serif;
    font-size: 40px;
  }
  h2 {
    margin: 0;
    font-size: 57px;
    font-weight: 400;
    line-height: 66px;
    text-align: center;
  }
  p {
    height: 46px;
    margin: 0;
    line-height: 46px;
    white-space: pre;
  }
  .center {
    text-align: center;
  }
  .l {
    font-size: 34px;
    font-style: italic;
  }
  .b,
  .o {
    font-style: italic;
    font-weight: 700;
  }
  .b {
    color: #3465a4;
  }
  .o {
    color: #ea7500;
  }
  .caret {
    border-left: 1px solid #555;
  }
  .divider {
    position: absolute;
    top: 269px;
    left: 232px;
    width: 1px;
    height: 1059px;
    background: #3465a4;
  }
  /* text boundary marks, each with the small square in the page corner */
  .corner {
    position: absolute;
    top: -12px;
    box-sizing: border-box;
    width: 29px;
    height: 28px;
    border-bottom: 1px solid #ccc;
  }
  .corner::after {
    content: '';
    position: absolute;
    top: 12px;
    width: 6px;
    height: 6px;
    background: #a0a0a0;
  }
  .start {
    left: 4px;
    border-right: 1px solid #bbb;
  }
  .start::after {
    left: -4px;
  }
  .end {
    right: 4px;
    border-left: 1px solid #bbb;
  }
  .end::after {
    right: -4px;
  }

  .scrollbar {
    box-sizing: border-box;
    width: 36px;
    padding: 36px 5px 0 6px;
    background: #171717;
  }
  .thumb {
    height: 499px;
    background: #959595;
  }

  .sidebar {
    position: relative;
    box-sizing: border-box;
    width: 60px;
    border-left: 1px solid #fff;
    padding: 6px 0 0 5px;
  }
  .handle {
    position: absolute;
    top: 959px;
    left: -1px;
    width: 5px;
    height: 52px;
    background: #fff;
  }
  .handle svg {
    width: 5px;
    height: 7px;
  }
  .burger {
    width: 54px;
    height: 22px;
  }
  .burger svg {
    width: 18px;
    height: 13px;
  }
  .decks {
    display: flex;
    flex-direction: column;
    justify-content: space-between;
    height: 403px;
    margin-top: 7px;
  }
  .deck {
    width: 54px;
    height: 48px;
  }
</style>
